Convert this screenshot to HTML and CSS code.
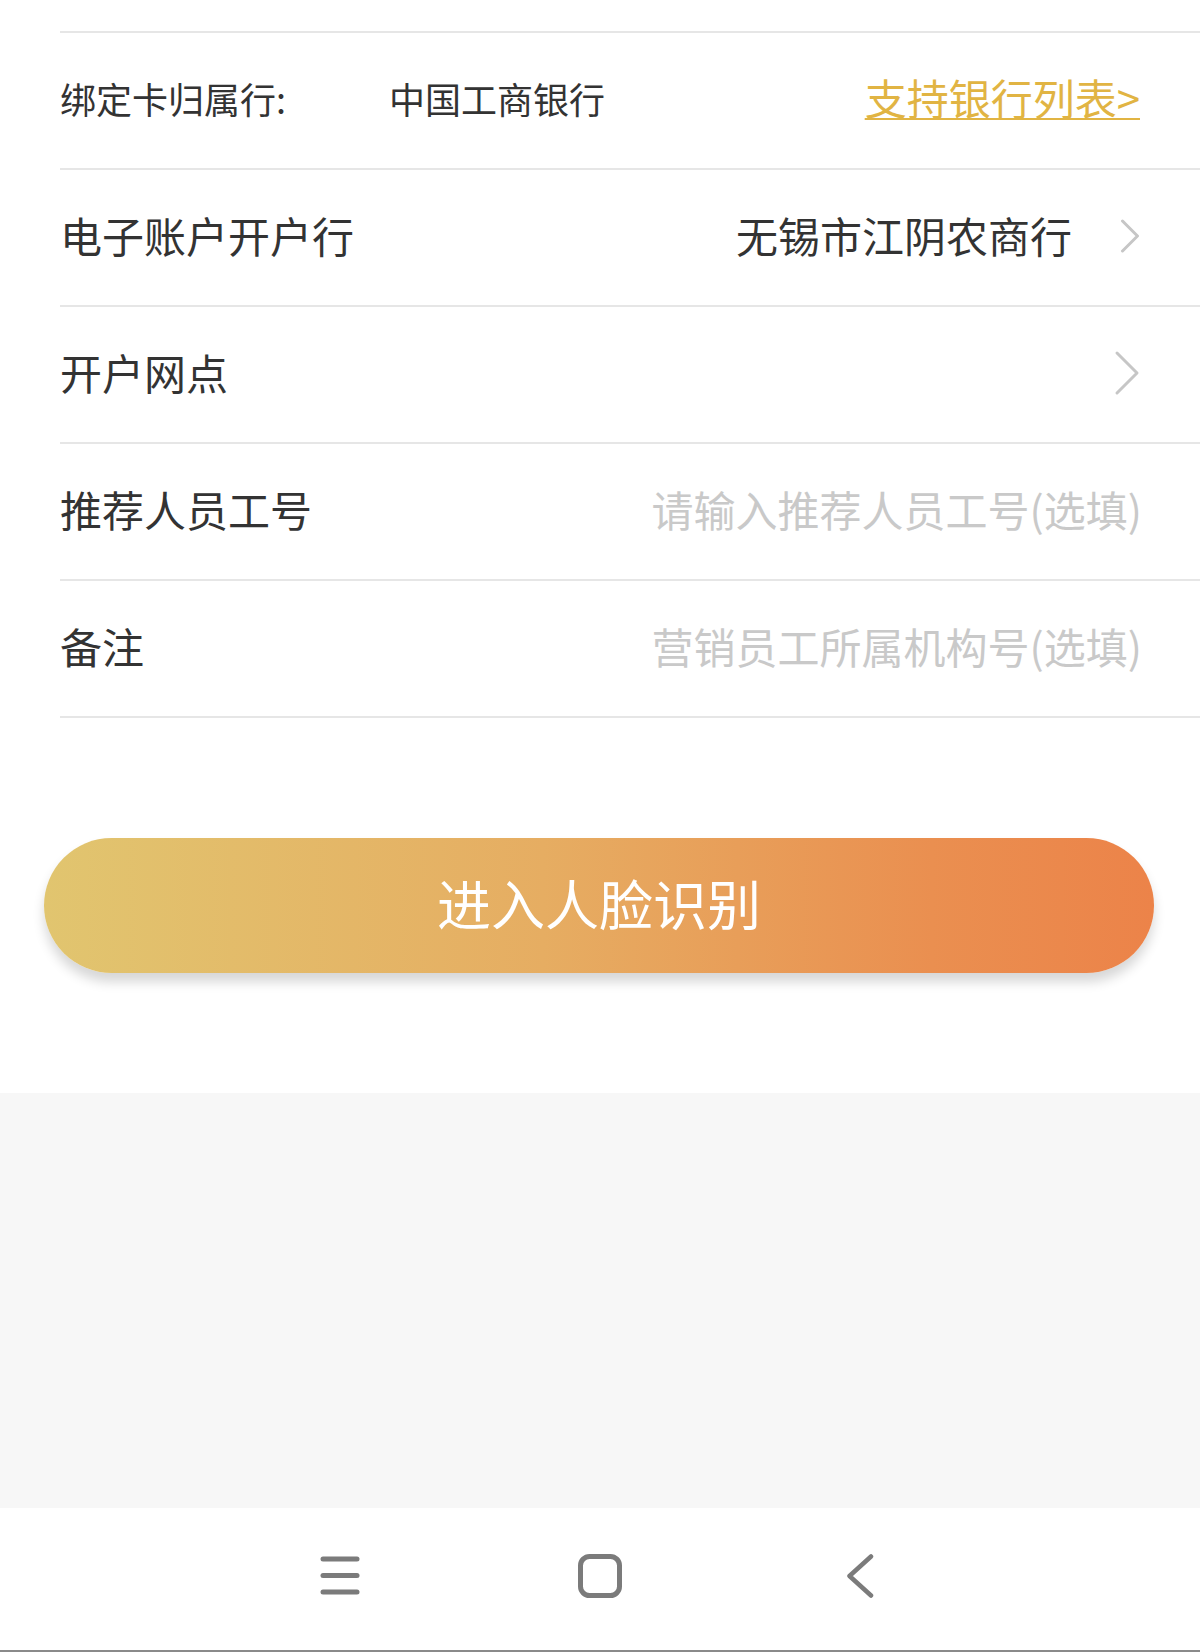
FILE: index.html
```html
<!DOCTYPE html>
<html lang="zh-CN">
<head>
  <meta charset="UTF-8">
  <meta name="viewport" content="width=device-width, initial-scale=1.0">
  <title>开户信息</title>
  <link rel="stylesheet" href="styles.css">
</head>
<body>
  <div class="form">
    <div class="row row-bank">
      <span class="bank-label">绑定卡归属行:</span>
      <span class="bank-name">中国工商银行</span>
      <a class="bank-list" href="#">支持银行列表&gt;</a>
    </div>
    <div class="row">
      <span class="label">电子账户开户行</span>
      <span class="value">无锡市江阴农商行</span>
      <svg class="arrow" width="20" height="34" viewBox="0 0 20 34">
        <polyline points="2.5,2 17.5,17 2.5,32" fill="none" stroke="#c6c6c6" stroke-width="3" stroke-linecap="round" stroke-linejoin="round"/>
      </svg>
    </div>
    <div class="row">
      <span class="label">开户网点</span>
      <svg class="arrow arrow-big" width="26" height="46" viewBox="0 0 26 46">
        <polyline points="3,3 23,23 3,43" fill="none" stroke="#c6c6c6" stroke-width="3" stroke-linecap="round" stroke-linejoin="round"/>
      </svg>
    </div>
    <div class="row">
      <span class="label">推荐人员工号</span>
      <input class="field" type="text" placeholder="请输入推荐人员工号(选填)">
    </div>
    <div class="row">
      <span class="label">备注</span>
      <input class="field" type="text" placeholder="营销员工所属机构号(选填)">
    </div>
  </div>

  <div class="action">
    <button class="btn-face">进入人脸识别</button>
  </div>

  <div class="filler"></div>

  <nav class="navbar">
    <div class="nav-slot">
      <svg width="40" height="40" viewBox="0 0 40 40">
        <g stroke="#7b7b7b" stroke-width="5" stroke-linecap="round">
          <line x1="3" y1="3" x2="37" y2="3"/>
          <line x1="3" y1="19.5" x2="37" y2="19.5"/>
          <line x1="3" y1="36" x2="37" y2="36"/>
        </g>
      </svg>
    </div>
    <div class="nav-slot">
      <svg width="44" height="44" viewBox="0 0 44 44">
        <rect x="2.5" y="2.5" width="39" height="39" rx="9" fill="none" stroke="#7b7b7b" stroke-width="5"/>
      </svg>
    </div>
    <div class="nav-slot">
      <svg width="28" height="44" viewBox="0 0 28 44">
        <polyline points="25,2.5 3.5,22 25,41.5" fill="none" stroke="#7b7b7b" stroke-width="4.5" stroke-linecap="round" stroke-linejoin="round"/>
      </svg>
    </div>
  </nav>
</body>
</html>
```

FILE: styles.css
```css
body {
  margin: 0;
  width: 1200px;
  font-family: "Noto Sans CJK SC", "Noto Sans", sans-serif;
  color: #333;
  background-color: #fff;
}
.form {
  padding-top: 31px;
  margin-left: 60px;
}
.row {
  display: flex;
  align-items: center;
  height: 129px;
  padding: 0 60px 6px 0;
  border-top: 2px solid #e6e6e6;
}
.row:last-child {
  border-bottom: 2px solid #e6e6e6;
}
.bank-label {
  width: 329px;
  font-size: 36px;
}
.bank-name {
  font-size: 36px;
}
.bank-list {
  margin-left: auto;
  font-size: 42px;
  line-height: 1.2;
  color: #e1b443;
  text-decoration: underline;
  text-decoration-thickness: 2px;
  text-underline-offset: 3px;
}
.label {
  font-size: 42px;
}
.value {
  margin-left: auto;
  font-size: 42px;
  color: #333;
}
.arrow {
  margin-left: 48px;
  margin-top: 2px;
}
.arrow-big {
  margin-left: auto;
}
.field {
  flex: 1;
  min-width: 0;
  margin-right: -2px;
  border: none;
  outline: none;
  padding: 0;
  background: transparent;
  text-align: right;
  font-family: inherit;
  font-size: 42px;
  color: #333;
}
.field::placeholder {
  color: #c9c9c9;
}
.action {
  padding: 120px 46px 120px 44px;
}
.btn-face {
  display: block;
  width: 100%;
  height: 135px;
  padding: 0 0 6px;
  border: none;
  border-radius: 68px;
  background: linear-gradient(to right, #e1c56f, #e6ad62 45%, #ea8f50 80%, #ec8349);
  box-shadow: 0 9px 12px rgba(0, 0, 0, 0.16);
  color: #fff;
  font-family: inherit;
  font-size: 54px;
  cursor: pointer;
}
.filler {
  height: 415px;
  background-color: #f7f7f7;
}
.navbar {
  display: flex;
  justify-content: center;
  align-items: center;
  height: 142px;
  border-bottom: 2px solid #8a8a8a;
  background-color: #fff;
}
.nav-slot {
  width: 260px;
  display: flex;
  justify-content: center;
  align-items: center;
  margin-top: -6px;
}
```
